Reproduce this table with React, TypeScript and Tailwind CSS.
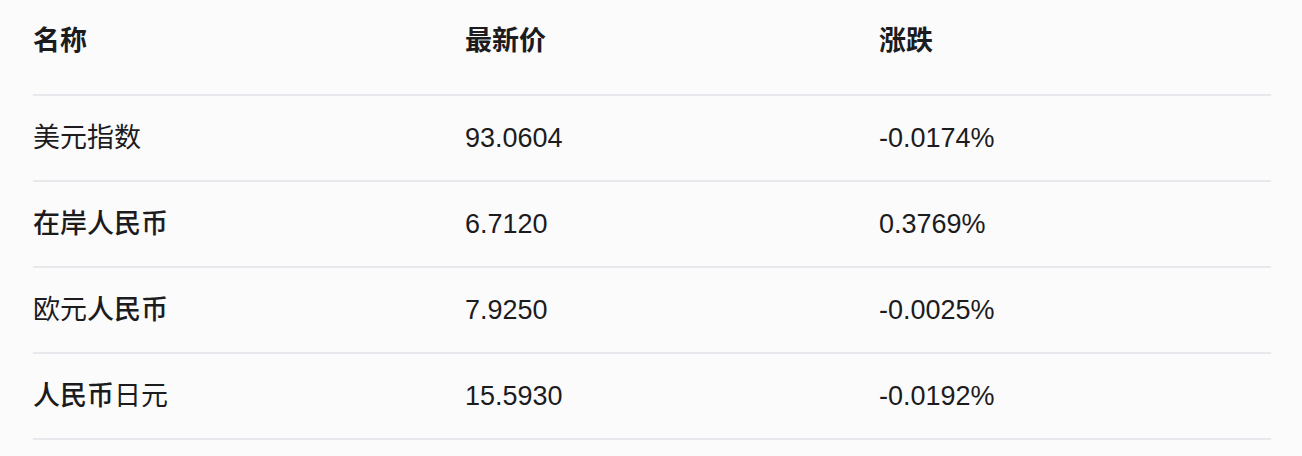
import React from 'react';

type Part = { text: string; bold?: boolean };

interface Row {
  name: Part[];
  price: string;
  change: string;
}

const rows: Row[] = [
  { name: [{ text: '美元指数' }], price: '93.0604', change: '-0.0174%' },
  { name: [{ text: '在岸人民币', bold: true }], price: '6.7120', change: '0.3769%' },
  { name: [{ text: '欧元' }, { text: '人民币', bold: true }], price: '7.9250', change: '-0.0025%' },
  { name: [{ text: '人民币', bold: true }, { text: '日元' }], price: '15.5930', change: '-0.0192%' },
];

const App: React.FC = () => {
  return (
    <div
      className="w-[1302px] h-[456px] bg-[#fcfbfc] text-[#1c1c1e] overflow-hidden"
      style={{ fontFamily: '"Liberation Sans", "Noto Sans CJK SC", sans-serif' }}
    >
      <div className="ml-[33px] w-[1238px]">
        {/* Header */}
        <div className="grid grid-cols-[432px_414px_1fr] items-center h-[96px] pb-[12px] border-b-2 border-[#e9e8ec] text-[27px] font-bold">
          <span>名称</span>
          <span>最新价</span>
          <span>涨跌</span>
        </div>

        {/* Rows */}
        {rows.map((row) => (
          <div
            key={row.price}
            className="grid grid-cols-[432px_414px_1fr] items-center h-[86px] border-b-2 border-[#e9e8ec] text-[27px]"
          >
            <span>
              {row.name.map((p, i) => (
                <span key={i} className={p.bold ? 'font-medium' : 'font-normal'}>
                  {p.text}
                </span>
              ))}
            </span>
            <span>{row.price}</span>
            <span>{row.change}</span>
          </div>
        ))}
      </div>
    </div>
  );
};

export default App;
